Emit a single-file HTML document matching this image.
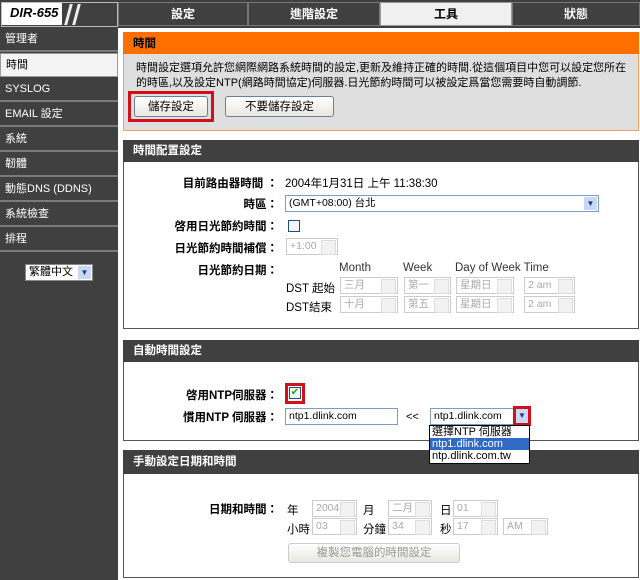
<!DOCTYPE html>
<html><head><meta charset="utf-8"><style>
*{box-sizing:border-box;margin:0;padding:0}
body{width:640px;height:580px;overflow:hidden;background:#fff;font-family:"Liberation Sans","Noto Sans CJK TC",sans-serif;font-size:11px;color:#000;position:relative}
.a{position:absolute}
.top{left:0;top:0;width:640px;height:28px;background:#404040}
.logo{left:2px;top:3px;width:60px;height:22px;background:#fff}
.sl{top:4px;width:3px;height:21px;background:#eee;transform:skewX(-15deg)}
.tab{top:2px;height:24px;background:#404040;color:#fff;font-weight:bold;font-size:12px;text-align:center;line-height:23px;border:1px solid #777}
.side{left:0;top:28px;width:118px;height:552px;background:#404040}
.si{left:0;width:118px;height:24px;color:#fff;font-size:11px;line-height:23px;padding-left:5px;border-bottom:2px solid #7a7a7a}
.hd{height:22px;background:#404040;color:#fff;font-weight:bold;font-size:11.5px;line-height:22px;padding-left:10px}
.box{border:1px solid #555;background:#fff}
.sel{border:1px solid #ccc;height:17px;color:#aaa;font-size:10.5px;line-height:15px;padding-left:3px;background:#fff}
.sel::after{content:"";position:absolute;right:1px;top:1px;width:13px;height:13px;background:#f2f2f2;border:1px solid #ddd}
.lbl{font-weight:bold;text-align:right;font-size:11.5px}
.btn{border:1px solid #6a7f99;border-radius:3px;background:linear-gradient(#fff,#e8e8e0);text-align:center;font-size:11.5px;line-height:20px}
</style></head><body>
<div class="a top"></div>
<div class="a" style="left:1px;top:2px;width:117px;height:25px;border:1px solid #bbb"></div>
<div class="a logo"><span style="position:absolute;left:8px;top:2px;font-style:italic;font-weight:bold;font-size:13px">DIR-655</span></div>
<div class="a sl" style="left:67px"></div>
<div class="a sl" style="left:75px"></div>
<div class="a tab" style="left:118px;width:130px">設定</div>
<div class="a tab" style="left:248px;width:132px">進階設定</div>
<div class="a tab" style="left:380px;width:132px;background:#f0f0f0;color:#000;border-color:#999">工具</div>
<div class="a tab" style="left:512px;width:128px">狀態</div>
<div class="a side"></div>
<div class="a si" style="top:28px">管理者</div>
<div class="a si" style="top:53px;background:#f4f4f4;color:#000;border:1px solid #999">時間</div>
<div class="a si" style="top:78px">SYSLOG</div>
<div class="a si" style="top:103px">EMAIL 設定</div>
<div class="a si" style="top:128px">系統</div>
<div class="a si" style="top:153px">韌體</div>
<div class="a si" style="top:178px">動態DNS (DDNS)</div>
<div class="a si" style="top:203px">系統檢查</div>
<div class="a si" style="top:228px">排程</div>
<div class="a" style="left:25px;top:264px;width:68px;height:17px;background:#fff;border:1px solid #888;font-size:11px;line-height:15px;padding-left:3px">繁體中文<span style="position:absolute;right:1px;top:1px;width:13px;height:13px;background:#c8d8f8;color:#336;font-size:8px;text-align:center;line-height:13px">▼</span></div>

<div class="a" style="left:123px;top:32px;width:516px;height:99px;background:#dfdfdf;border:1px solid #f0a060"></div>
<div class="a" style="left:123px;top:32px;width:516px;height:22px;background:#ff6f00;color:#000;font-weight:bold;font-size:11.5px;line-height:24px;padding-left:10px">時間</div>
<div class="a" style="left:136px;top:61px;width:500px;font-size:11px;line-height:15px">時間設定選項允許您網際網路系統時間的設定,更新及維持正確的時間.從這個項目中您可以設定您所在的時區,以及設定NTP(網路時間協定)伺服器.日光節約時間可以被設定爲當您需要時自動調節.</div>
<div class="a" style="left:128px;top:91px;width:86px;height:31px;border:3px solid #d0101a"></div>
<div class="a btn" style="left:134px;top:96px;width:74px;height:21px">儲存設定</div>
<div class="a btn" style="left:225px;top:96px;width:109px;height:21px">不要儲存設定</div>

<div class="a box" style="left:123px;top:140px;width:516px;height:189px"></div>
<div class="a hd" style="left:123px;top:140px;width:516px">時間配置設定</div>
<div class="a lbl" style="left:130px;top:175px;width:148px">目前路由器時間 ：</div>
<div class="a" style="left:285px;top:175px;font-size:11.5px">2004年1月31日 上午 11:38:30</div>
<div class="a lbl" style="left:130px;top:196px;width:148px">時區：</div>
<div class="a" style="left:285px;top:195px;width:314px;height:17px;border:1px solid #7f9db9;font-size:10.5px;line-height:15px;padding-left:3px">(GMT+08:00) 台北<span style="position:absolute;right:1px;top:1px;width:13px;height:13px;background:#c8d8f8;color:#336;font-size:8px;text-align:center;line-height:13px">▼</span></div>
<div class="a lbl" style="left:130px;top:218px;width:148px">啓用日光節約時間：</div>
<div class="a" style="left:288px;top:220px;width:12px;height:12px;border:1px solid #1c5180;background:#f4f4f4"></div>
<div class="a lbl" style="left:130px;top:240px;width:148px">日光節約時間補償：</div>
<div class="a sel" style="left:286px;top:238px;width:52px">+1:00</div>
<div class="a lbl" style="left:130px;top:262px;width:148px">日光節約日期：</div>
<div class="a" style="left:339px;top:262px;font-size:11.5px;color:#333">Month</div>
<div class="a" style="left:403px;top:262px;font-size:11.5px;color:#333">Week</div>
<div class="a" style="left:455px;top:262px;font-size:11.5px;color:#333">Day of Week Time</div>
<div class="a" style="left:286px;top:280px;font-size:11.5px">DST 起始</div>
<div class="a" style="left:286px;top:299px;font-size:11.5px">DST結束</div>
<div class="a sel" style="left:340px;top:277px;width:58px">三月</div>
<div class="a sel" style="left:404px;top:277px;width:47px">第一</div>
<div class="a sel" style="left:456px;top:277px;width:58px">星期日</div>
<div class="a sel" style="left:524px;top:277px;width:51px">2 am</div>
<div class="a sel" style="left:340px;top:296px;width:58px">十月</div>
<div class="a sel" style="left:404px;top:296px;width:47px">第五</div>
<div class="a sel" style="left:456px;top:296px;width:58px">星期日</div>
<div class="a sel" style="left:524px;top:296px;width:51px">2 am</div>

<div class="a box" style="left:123px;top:340px;width:516px;height:101px"></div>
<div class="a hd" style="left:123px;top:340px;width:516px">自動時間設定</div>
<div class="a lbl" style="left:130px;top:387px;width:148px">啓用NTP伺服器：</div>
<div class="a" style="left:285px;top:383px;width:20px;height:21px;border:3px solid #d0101a"></div>
<div class="a" style="left:289px;top:387px;width:12px;height:12px;border:1px solid #1c5180;background:#f4f4f4;color:#21a121;font-size:10px;line-height:10px;text-align:center">✔</div>
<div class="a lbl" style="left:130px;top:409px;width:148px">慣用NTP 伺服器：</div>
<div class="a" style="left:285px;top:408px;width:113px;height:17px;border:1px solid #7f9db9;font-size:10.5px;line-height:15px;padding-left:3px">ntp1.dlink.com</div>
<div class="a" style="left:406px;top:411px;font-size:11px">&lt;&lt;</div>
<div class="a" style="left:430px;top:408px;width:100px;height:17px;border:1px solid #7f9db9;font-size:10.5px;line-height:15px;padding-left:3px">ntp1.dlink.com</div>
<div class="a" style="left:513px;top:406px;width:18px;height:20px;border:3px solid #d0101a;background:#c8d8f8;color:#336;font-size:8px;text-align:center;line-height:14px">▼</div>
<div class="a" style="left:429px;top:425px;width:101px;height:39px;border:1px solid #000;background:#fff;font-size:11px;line-height:12px;z-index:2">
<div style="padding-left:2px">選擇NTP 伺服器</div><div style="background:#316ac5;color:#fff;padding-left:2px">ntp1.dlink.com</div><div style="padding-left:2px">ntp.dlink.com.tw</div></div>

<div class="a box" style="left:123px;top:450px;width:516px;height:128px"></div>
<div class="a hd" style="left:123px;top:450px;width:516px;height:24px;line-height:24px">手動設定日期和時間</div>
<div class="a lbl" style="left:130px;top:501px;width:148px">日期和時間：</div>
<div class="a" style="left:287px;top:502px;font-size:11.5px">年</div>
<div class="a sel" style="left:312px;top:500px;width:45px">2004</div>
<div class="a" style="left:363px;top:502px;font-size:11.5px">月</div>
<div class="a sel" style="left:388px;top:500px;width:44px">二月</div>
<div class="a" style="left:440px;top:502px;font-size:11.5px">日</div>
<div class="a sel" style="left:453px;top:500px;width:45px">01</div>
<div class="a" style="left:287px;top:521px;font-size:11.5px">小時</div>
<div class="a sel" style="left:312px;top:518px;width:45px">03</div>
<div class="a" style="left:363px;top:521px;font-size:11.5px">分鐘</div>
<div class="a sel" style="left:388px;top:518px;width:44px">34</div>
<div class="a" style="left:440px;top:521px;font-size:11.5px">秒</div>
<div class="a sel" style="left:453px;top:518px;width:45px">17</div>
<div class="a sel" style="left:503px;top:518px;width:45px">AM</div>
<div class="a btn" style="left:288px;top:543px;width:172px;height:20px;color:#999;border-color:#ccc;line-height:18px">複製您電腦的時間設定</div>
</body></html>
